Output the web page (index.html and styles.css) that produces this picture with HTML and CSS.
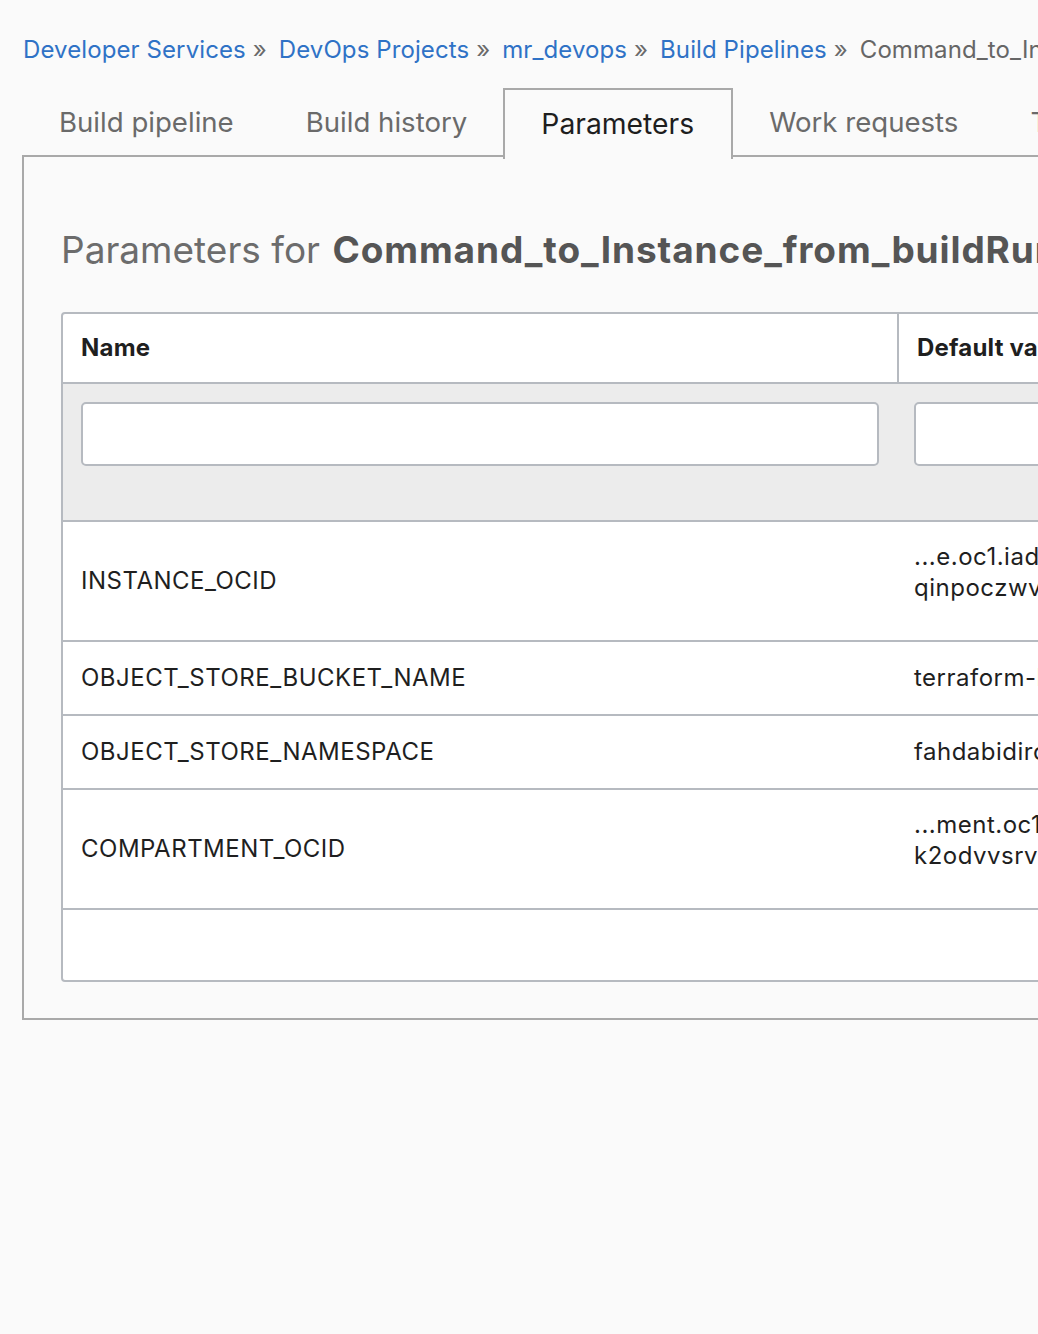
FILE: index.html
```html
<!DOCTYPE html>
<html lang="en">
<head>
<meta charset="utf-8">
<title>Parameters</title>
<link rel="stylesheet" href="styles.css">
</head>
<body>
<div class="page">
  <nav class="crumbs">
    <a class="crumb">Developer Services</a><span class="sep">»</span>
    <a class="crumb">DevOps Projects</a><span class="sep">»</span>
    <a class="crumb">mr_devops</a><span class="sep">»</span>
    <a class="crumb">Build Pipelines</a><span class="sep">»</span>
    <span class="current">Command_to_Instance_from_buildRun</span>
  </nav>
  <div class="tabs">
    <div class="tab">Build pipeline</div>
    <div class="tab">Build history</div>
    <div class="tab active">Parameters</div>
    <div class="tab">Work requests</div>
    <div class="tab">Triggers</div>
  </div>
  <section class="panel">
    <h1 class="title">Parameters for <b>Command_to_Instance_from_buildRun</b></h1>
    <div class="table">
      <div class="row head">
        <div class="cell name">Name</div>
        <div class="cell val">Default value</div>
      </div>
      <div class="row filter">
        <div class="cell name"><div class="input"></div></div>
        <div class="cell val"><div class="input"></div></div>
      </div>
      <div class="row tall">
        <div class="cell name mid">INSTANCE_OCID</div>
        <div class="cell val"><div class="multi">...e.oc1.iad.anuwcljsmqqwunacqinpoczwvsrvq<br>qinpoczwvsrvqwunacanuwcljs</div></div>
      </div>
      <div class="row">
        <div class="cell name mid">OBJECT_STORE_BUCKET_NAME</div>
        <div class="cell val">terraform-bucket</div>
      </div>
      <div class="row">
        <div class="cell name mid">OBJECT_STORE_NAMESPACE</div>
        <div class="cell val">fahdabidiroz</div>
      </div>
      <div class="row tall">
        <div class="cell name mid">COMPARTMENT_OCID</div>
        <div class="cell val"><div class="multi">...ment.oc1..aaaaaaaawunacqinpoc<br>k2odvvsrvqwunacanuwcljs</div></div>
      </div>
      <div class="row empty"></div>
    </div>
  </section>
</div>
</body>
</html>
```

FILE: styles.css
```css
html, body {
  margin: 0;
  padding: 0;
  overflow: hidden;
  background: #fafafa;
}
body {
  font-family: "Inter", "Noto Sans", sans-serif;
  color: #222;
}
.page {
  width: 1600px;
  padding: 30px 0 0 22px;
}
.crumbs {
  font-size: 24px;
  line-height: 40px;
  height: 40px;
  white-space: nowrap;
  padding-left: 1px;
  letter-spacing: 0.1px;
}
.crumb { color: #2f72c6; }
.sep { color: #6a6a6a; margin: 0 5px 0 7px; }
.current { color: #666; }

.tabs {
  display: flex;
  margin-top: 18px;
  border-bottom: 2px solid #a9a9a9;
  height: 67px;
}
.tab {
  padding: 0 36px;
  font-size: 27.6px;
  line-height: 69px;
  color: #6a6a6a;
  white-space: nowrap;
}
.tab:first-child { padding-left: 37px; }
.tab.active {
  color: #1e1e1e;
  font-size: 28.3px;
  border: 2px solid #a9a9a9;
  border-bottom: none;
  background: #fafafa;
  height: 69px;
  line-height: 69px;
  padding: 0 37px 0 36px;
}
.panel {
  border: 2px solid #a9a9a9;
  border-top: none;
  padding: 68px 0 36px 37px;
  background: #fafafa;
}
.title {
  margin: 0 0 37px;
  font-size: 37px;
  line-height: 50px;
  font-weight: 400;
  color: #6c6c6c;
  white-space: nowrap;
}
.title b { color: #555; font-weight: 700; letter-spacing: 0.9px; margin-left: 2px; }

.table {
  border: 2px solid #b6bac0;
  border-radius: 4px;
  background: #fff;
}
.row {
  display: flex;
  border-top: 2px solid #b6bac0;
}
.row:first-child { border-top: none; }
.cell {
  font-size: 24px;
  line-height: 30px;
  padding: 21px 18px;
  white-space: nowrap;
  color: #1f1f1f;
  letter-spacing: 0.5px;
}
.cell.name {
  width: 798px;
  flex: none;
}
.cell.val { flex: 1; padding-left: 17px; }
.head .cell {
  font-weight: 700;
  padding: 18px 18px;
  line-height: 32px;
  letter-spacing: 0.2px;
}
.head .cell.name { border-right: 2px solid #b6bac0; }
.filter { background: #ececec; }
.filter .cell { padding: 18px 18px 54px; }
.filter .cell.val { padding-left: 17px; }
.input {
  border: 2px solid #b6bac0;
  border-radius: 5px;
  background: #fff;
  box-sizing: border-box;
  height: 64px;
}
.row .cell.mid { display: flex; align-items: center; }
.multi { line-height: 31px; padding-bottom: 16px; margin-top: -2px; }
.empty { height: 70px; }
```
